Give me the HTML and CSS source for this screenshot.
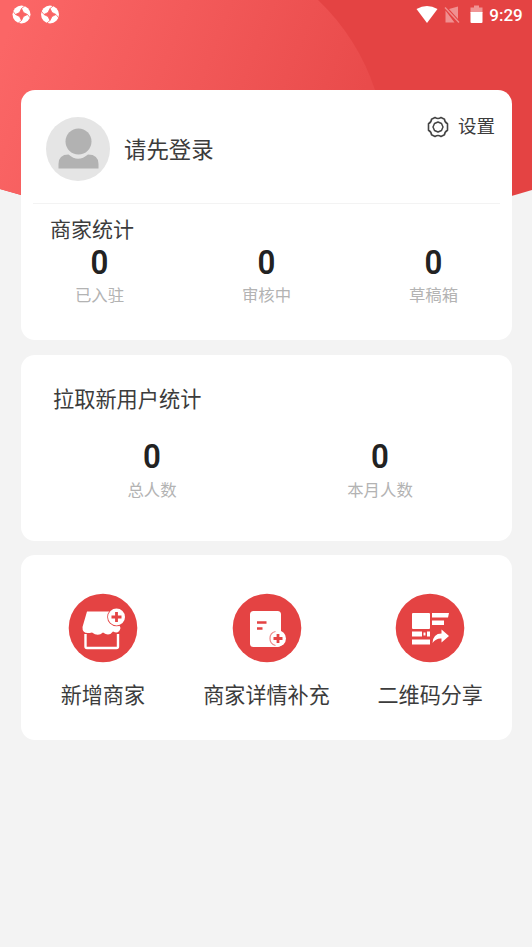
FILE: index.html
```html
<!DOCTYPE html>
<html lang="zh-CN">
<head>
<meta charset="utf-8">
<title>商家统计</title>
<link rel="stylesheet" href="styles.css">
</head>
<body>
<svg class="backdrop" width="532" height="220" viewBox="0 0 532 220">
  <defs>
    <linearGradient id="glow" gradientUnits="userSpaceOnUse" x1="0" y1="50" x2="330" y2="180">
      <stop offset="0" stop-color="#fb6666"/>
      <stop offset="1" stop-color="#e94b4b"/>
    </linearGradient>
    <clipPath id="hero"><path d="M0 0H532V190Q266 270 0 189Z"/></clipPath>
  </defs>
  <g clip-path="url(#hero)">
    <rect width="532" height="220" fill="#e44343"/>
    <path d="M0 0H318A220 220 0 0 1 375 90L375 220H0Z" fill="url(#glow)"/>
  </g>
</svg>
<header class="status">
  <svg class="app-icons" width="48" height="20" viewBox="0 0 48 20">
    <defs>
      <g id="shutter">
        <circle r="9" fill="#fff"/>
        <path d="M0 -6L2 -2L6 0L2 2L0 6L-2 2L-6 0L-2 -2Z" fill="#fa6464" stroke="#fa6464" stroke-width=".8"/>
        <path d="M0 -6L3.500 -8.800M6 0L8.800 3.500M0 6L-3.500 8.800M-6 0L-8.800 -3.500" stroke="#fa6464" stroke-width=".8"/>
      </g>
    </defs>
    <use href="#shutter" x="9.500" y="9.500"/>
    <use href="#shutter" x="38" y="9.500"/>
  </svg>
  <svg class="signals" width="70" height="20" viewBox="0 0 70 20">
    <path d="M.5 4Q11 -2 21.500 4L11 18Z" fill="#fff"/>
    <path d="M33 4L42 1.500V14ZM29.500 5.500V17.500H38.500Z" fill="#f09090"/>
    <path d="M29 2.500L43 17.500" stroke="#f09090" stroke-width="1.400"/>
    <path d="M58 .5H63V2.500H66.500V8H54.500V2.500H58Z" fill="#f09494"/>
    <path d="M54.500 7H66.500V17Q66.500 18 65.500 18H55.500Q54.500 18 54.500 17Z" fill="#fff"/>
  </svg>
  <span class="clock">9:29</span>
</header>
<main class="cards">
  <section class="card profile-card">
    <div class="profile">
      <svg class="avatar" width="64" height="64" viewBox="0 0 64 64">
        <circle cx="32" cy="32" r="32" fill="#e5e5e5"/>
        <path d="M12.500 51.500V47Q12.500 37.500 22.500 37.500Q32 46 42 37.500Q52.500 37.500 52.500 47V51.500Z" fill="#b2b2b2"/>
        <circle cx="32.500" cy="24.500" r="13" fill="#b2b2b2"/>
      </svg>
      <span class="login">请先登录</span>
      <span class="settings">
        <svg width="22" height="22" viewBox="0 0 22 22" fill="none" stroke="#444" stroke-width="1.600" stroke-linejoin="round">
          <path d="M8 1.500Q11 3.500 14 1.500L17.500 3.200Q17.500 6 20.500 7.800V14.200Q17.500 16 17.500 18.800L14 20.500Q11 18.500 8 20.500L4.500 18.800Q4.500 16 1.500 14.200V7.800Q4.500 6 4.500 3.200Z"/>
          <path d="M11 6L14.500 7.500L16 11L14.500 14.500L11 16L7.500 14.500L6 11L7.500 7.500Z" stroke-width="1.500"/>
        </svg>
        设置
      </span>
    </div>
    <h2>商家统计</h2>
    <div class="stats three">
      <div><b>0</b><span>已入驻</span></div>
      <div><b>0</b><span>审核中</span></div>
      <div><b>0</b><span>草稿箱</span></div>
    </div>
  </section>
  <section class="card users-card">
    <h2>拉取新用户统计</h2>
    <div class="stats two">
      <div><b>0</b><span>总人数</span></div>
      <div><b>0</b><span>本月人数</span></div>
    </div>
  </section>
  <section class="card actions">
    <div class="action">
      <svg width="70" height="70" viewBox="0 0 70 70">
        <circle cx="35" cy="35" r="34.300" fill="#e44343"/>
        <path d="M19 18.500H46L52.500 35Q51 41.500 45 38.500Q41 44 35 39.500Q30 44 24 39.500Q14 42 14.500 34Z" fill="#fff"/>
        <path d="M17.500 41V53.500Q17.500 55 19 55H48.500Q50 55 50 53.500V41" fill="none" stroke="#fff" stroke-width="2.400"/>
        <circle cx="48.500" cy="24" r="9.300" fill="#e44343"/>
        <circle cx="48.500" cy="24" r="8.500" fill="#fff"/>
        <path d="M43.500 24H53.500M48.500 19V29" stroke="#e44343" stroke-width="2.800"/>
      </svg>
      <span>新增商家</span>
    </div>
    <div class="action">
      <svg width="70" height="70" viewBox="0 0 70 70">
        <circle cx="35" cy="35" r="34.300" fill="#e44343"/>
        <rect x="18" y="18" width="31" height="36" rx="3.500" fill="#fff"/>
        <path d="M25 29.500H34.500M25 35.500H30.500" stroke="#e44343" stroke-width="2.400"/>
        <circle cx="46" cy="45.500" r="8" fill="#fff"/>
        <path d="M43.500 38.500A7.200 7.200 0 0 0 43.500 52.500" fill="none" stroke="#ee8a8a" stroke-width="1.200"/>
        <path d="M41.500 45.500H50.500M46 41V50" stroke="#e44343" stroke-width="2.800"/>
      </svg>
      <span>商家详情补充</span>
    </div>
    <div class="action">
      <svg width="70" height="70" viewBox="0 0 70 70">
        <circle cx="35" cy="35" r="34.300" fill="#e44343"/>
        <g fill="#fff">
          <rect x="17" y="20" width="18" height="16" rx="1"/>
          <path d="M37 20H54L53 24.500H37ZM37 27.500H49V32H37Z"/>
          <path d="M17 38.500H27V43.500H17ZM28.500 39.500H30.500V42.500H28.500ZM32 38.500H35V43.500H32ZM17 46.500H35V51.500H17Z"/>
          <path d="M37.500 50Q38 40.500 46.500 40.500V36.500L54 43L46.500 49.500V45.500Q41 45 37.500 50Z"/>
        </g>
      </svg>
      <span>二维码分享</span>
    </div>
  </section>
</main>
</body>
</html>
```
FILE: styles.css
```css
* { box-sizing: border-box; }
body {
  margin: 0;
  min-height: 947px;
  background: #f3f3f3;
  color: #3c3c3c;
  font-family: Roboto, "Noto Sans CJK SC", sans-serif;
}
.backdrop { position: absolute; top: 0; left: 0; z-index: -1; }
.status { display: flex; height: 90px; padding: 5px 9px 0 12px; }
.signals { margin-left: auto; }
.clock { width: 34px; margin-left: 3px; color: #fff; font-size: 17px; font-weight: 500; line-height: 20px; text-align: center; white-space: nowrap; }
.cards { display: flex; flex-direction: column; gap: 14px; margin: 0 20px 0 21px; }
.card { background: #fff; border-radius: 14px; }
.profile-card { height: 250px; }
.users-card { margin-top: 1px; }
.profile { display: flex; height: 114px; margin: 0 12px; padding: 27px 5px 0 13px; border-bottom: 1px solid #f3f3f3; }
.login { margin-left: 14px; font-size: 22.400px; line-height: 66px; }
.settings { display: flex; align-items: center; gap: 9px; height: 22px; margin-left: auto; margin-top: -1px; font-size: 18.500px; line-height: 24px; }
h2 { margin: 0; font-size: 21px; font-weight: 400; line-height: 30px; }
.profile-card h2 { padding: 11px 0 0 29px; }
.stats { display: grid; text-align: center; }
.stats b { display: block; color: #222; font-size: 34px; font-weight: 600; line-height: 36px; transform: scaleX(.92); }
.stats span { display: block; color: #b3b3b3; font-size: 16.400px; line-height: 24px; }
.three { grid-template-columns: repeat(3, 167px); margin: -1px 0 0 -5px; }
.three span { margin-top: 4px; }
.users-card { height: 186px; padding-top: 30px; }
.users-card h2 { padding-left: 32px; font-size: 21.200px; }
.two { grid-template-columns: repeat(2, 228px); margin: 23px 0 0 17px; }
.two span { margin-top: 5px; }
.actions { display: grid; grid-template-columns: repeat(3, 163.700px); height: 185px; padding-top: 38px; }
.action { display: flex; flex-direction: column; align-items: center; gap: 18px; font-size: 21.100px; line-height: 30px; white-space: nowrap; }
```
